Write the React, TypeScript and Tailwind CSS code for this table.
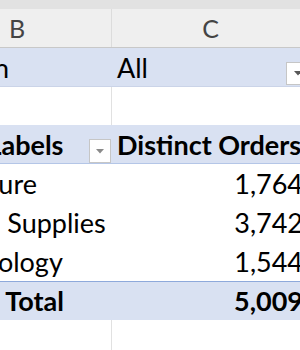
function Caret({ color }: { color: string }) {
  return (
    <svg width="8" height="5" viewBox="0 0 8 5" className="block">
      <path d="M0 0 H8 L4 4.5 Z" fill={color} />
    </svg>
  );
}

function FilterButton({ className = "", caret = "#595959" }: { className?: string; caret?: string }) {
  return (
    <div className={`flex shrink-0 items-center justify-center border border-[#c6c6c6] bg-white ${className}`}>
      <Caret color={caret} />
    </div>
  );
}

const rows = [
  { label: "Furniture", value: "1,764" },
  { label: "Office Supplies", value: "3,742" },
  { label: "Technology", value: "1,544" },
];

export default function App() {
  return (
    <div className="h-[350px] w-[300px] overflow-hidden bg-white font-['Lato',sans-serif] text-[27px] leading-none text-black">
      <div className="h-[9px] bg-[#e2e2e2]" />
      <div className="-ml-[77px] w-[386px]">
        {/* column letters */}
        <div className="flex h-[39px] border-b border-[#c8c8c8] bg-[#efefef] text-[25px] text-[#444]">
          <div className="flex w-[189px] items-center justify-center border-r border-[#dcdcdc]">B</div>
          <div className="flex w-[197px] items-center justify-center">C</div>
        </div>

        {/* report filter */}
        <div className="flex h-[39px] border-b border-[#cbd4e8] bg-[#d9e1f2]">
          <div className="flex w-[189px] items-end pb-[5px] pl-[5px]">Region</div>
          <div className="flex w-[197px] items-end justify-between">
            <span className="pb-[5px] pl-[5px]">All</span>
            <FilterButton className="mb-[1px] h-[23px] w-[23px]" />
          </div>
        </div>

        {/* empty row */}
        <div className="flex h-[38px]">
          <div className="w-[189px] border-r border-[#e1e1e1]" />
          <div className="w-[197px]" />
        </div>

        {/* pivot header */}
        <div className="flex h-[39px] border-b border-[#b4c6e7] bg-[#d9e1f2] font-bold">
          <div className="flex w-[189px] items-end justify-between">
            <span className="pb-[5px] pl-[5px]">Row Labels</span>
            <FilterButton className="mr-[1px] h-[24px] w-[22px]" caret="#8a8a8a" />
          </div>
          <div className="flex w-[197px] items-end whitespace-nowrap pb-[5px] pl-[5px]">Distinct Orders</div>
        </div>

        {rows.map((r) => (
          <div key={r.label} className="flex h-[39px]">
            <div className="flex w-[189px] items-end whitespace-nowrap pb-[6px] pl-[5px]">{r.label}</div>
            <div className="flex w-[197px] items-end justify-end pb-[6px] pr-[6px]">{r.value}</div>
          </div>
        ))}

        {/* grand total */}
        <div className="flex h-[39px] border-t border-[#8ea9db] bg-[#d9e1f2] font-bold">
          <div className="flex w-[189px] items-end whitespace-nowrap pb-[6px] [word-spacing:3px]">Grand Total</div>
          <div className="flex w-[197px] items-end justify-end pb-[6px] pr-[6px]">5,009</div>
        </div>

        {/* empty row */}
        <div className="flex h-[39px]">
          <div className="w-[189px] border-r border-[#e1e1e1]" />
          <div className="w-[197px]" />
        </div>
      </div>
    </div>
  );
}
